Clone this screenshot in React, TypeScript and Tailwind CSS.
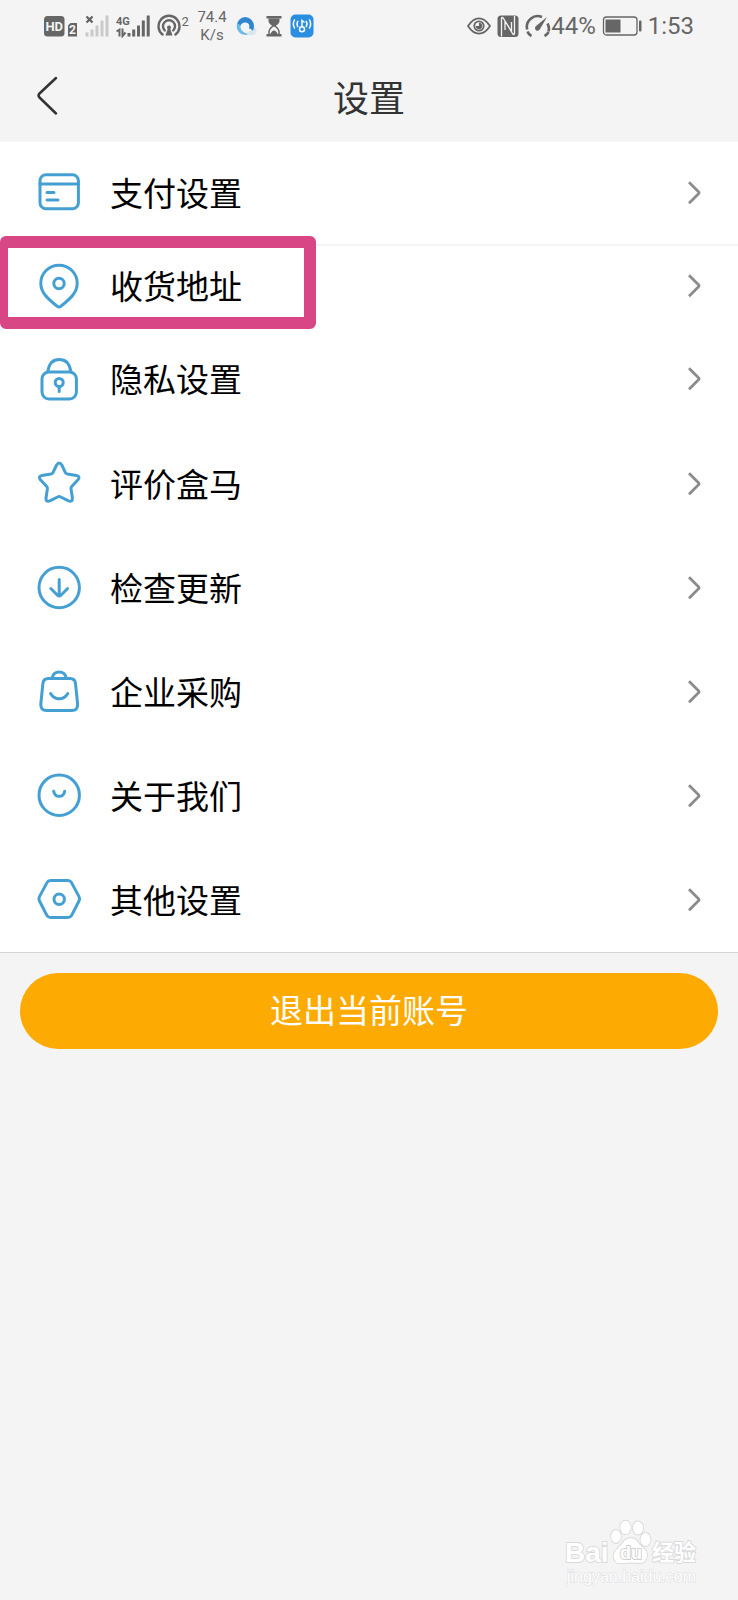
import React from 'react'

const icons = {
    card: (
        <>
            <rect x="3" y="3.7" width="38.4" height="34" rx="6" />
            <path d="M3 13H41.4M10 21.6H17M10 29H21" />
        </>
    ),
    pin: (
        <>
            <path d="M22 1.2C11.8 1.2 3.8 9.2 3.8 19.2C3.8 29.5 12 35.5 20 42.2Q22 43.8 24 42.2C32 35.5 40.2 29.5 40.2 19.2C40.2 9.2 32.2 1.2 22 1.2Z" />
            <circle cx="22" cy="19.5" r="5.2" />
        </>
    ),
    lock: (
        <>
            <rect x="5" y="15" width="34.4" height="27" rx="7" />
            <path d="M10.8 14.5C12 6.5 16.5 2.5 22.3 2.5S32.6 6.5 33.8 14.5" />
            <circle cx="22.2" cy="25.5" r="4" />
            <path d="M22.2 30V34.5" />
        </>
    ),
    star: (
        <path d="M19.6 3Q22.2 -1 24.8 3L28.4 10.6Q29 11.9 30.4 12.1L39.4 13.4Q43.6 14.5 41 17.8L34.7 24.6Q33.8 25.6 34 26.8L35.4 36Q35.6 40.4 31.6 38.9L23.8 35Q22.2 34.2 20.6 35L12.8 38.9Q8.8 40.4 9 36L10.4 26.8Q10.6 25.6 9.7 24.6L3.4 17.8Q.8 14.5 5 13.4L14 12.1Q15.4 11.9 16 10.6Z" />
    ),
    update: (
        <>
            <circle cx="22.2" cy="21.5" r="20.2" />
            <path d="M22.2 13.5V30M13.8 22.5L20.5 29.2Q22.2 31 23.9 29.2L30.6 22.5" />
        </>
    ),
    bag: (
        <>
            <path d="M11.5 8.6H33Q38 8.6 38.5 13.5L40.6 34Q41 40.6 34.8 40.6H9.6Q3.4 40.6 3.8 34L5.9 13.5Q6.4 8.6 11.5 8.6Z" />
            <path d="M15.2 7.5C17 .2 27.4 .2 29.2 7.5M13.6 23.5C17.5 30.5 26.9 30.5 30.8 23.5" />
        </>
    ),
    about: (
        <>
            <circle cx="22.2" cy="21.2" r="20.2" />
            <path d="M16.7 17.2C18 24 26.4 24 27.7 17.2" />
        </>
    ),
    more: (
        <>
            <path d="M13.5 2.6H31Q33.3 2.6 34.5 4.6L42 18.6Q43.2 20.8 42 23L34.5 37.6Q33.3 39.6 31 39.6H13.5Q11.2 39.6 10 37.6L2.5 23Q1.3 20.8 2.5 18.6L10 4.6Q11.2 2.6 13.5 2.6Z" />
            <circle cx="22.2" cy="21.2" r="5.2" />
        </>
    ),
}

const rows = [
    { label: '支付设置', icon: icons.card, size: 'h-[104px] border-b-2 border-[#f3f3f3]' },
    { label: '收货地址', icon: icons.pin, size: 'h-20', marked: true },
    { label: '隐私设置', icon: icons.lock, size: 'h-[106px]' },
    { label: '评价盒马', icon: icons.star, size: 'h-[104px]' },
    { label: '检查更新', icon: icons.update, size: 'h-[104px]' },
    { label: '企业采购', icon: icons.bag, size: 'h-[104px]' },
    { label: '关于我们', icon: icons.about, size: 'h-[104px]' },
    { label: '其他设置', icon: icons.more, size: 'h-[104px]' },
]

function StatusBar() {
    return (
        <div className="flex h-[50px] items-center justify-between px-11 pt-0.5 text-[#666]">
            <div className="flex items-center gap-[7px]">
                <svg width="34" height="24" viewBox="0 0 34 24" fill="currentColor">
                    <rect x="0" y="2" width="20.5" height="20.5" rx="3.5" />
                    <text x="10.2" y="17" fontSize="13" fontWeight="700" fill="#f4f4f4" textAnchor="middle">HD</text>
                    <path d="M26.5 9H33V22.5H24V11.5Z" />
                    <text x="28.5" y="20" fontSize="12" fontWeight="700" fill="#f4f4f4" textAnchor="middle">2</text>
                </svg>
                <svg width="24" height="24" viewBox="0 0 24 24" fill="#c9c9c9">
                    <path d="M.5 18.5h3v4h-3zM5.5 15.5h3v7h-3zM10.5 11.5h3v11h-3zM15.5 6.5h3v16h-3zM20.5 1.5h3v21h-3z" />
                    <path d="M1.5 2.5L7.5 8.5M7.5 2.5L1.5 8.5" stroke="#616161" strokeWidth="2.2" />
                </svg>
                <svg width="34" height="24" viewBox="0 0 34 24" fill="currentColor">
                    <text x="0" y="11" fontSize="11" fontWeight="700">4G</text>
                    <path d="M11.5 19h3v3.5h-3zM16.2 15.5h3v7h-3zM21 11.5h3v11h-3zM25.8 6.5h3v16h-3zM30.7 1.5h3v21h-3z" />
                    <path d="M.5 17.5L3.5 15.5V22.5M6.5 14.5V22L9.5 18.5" fill="none" stroke="currentColor" strokeWidth="2" />
                </svg>
                <svg width="33" height="24" viewBox="0 0 33 24" fill="none" stroke="currentColor" strokeWidth="2.4" strokeLinecap="round">
                    <path d="M5.5 20.5A10.5 10.5 0 1 1 18.5 20.5" />
                    <path d="M7.8 16.5A6 6 0 1 1 16.2 16.5" />
                    <path d="M12 11.5A2 2 0 0 1 13.3 15L15.5 21.5H8.5L10.7 15A2 2 0 0 1 12 11.5Z" fill="currentColor" stroke="none" />
                    <text x="24.5" y="12" fontSize="13" fill="currentColor" stroke="none">2</text>
                </svg>
                <div className="flex h-9 w-[30px] flex-col text-center text-[15px] leading-[18px]">
                    <span>74.4</span>
                    <span>K/s</span>
                </div>
                <svg width="24" height="24" viewBox="0 0 24 24">
                    <path d="M10 21H19.5A4.5 4.5 0 0 0 20.5 13Z" fill="#dbe7ef" />
                    <path d="M11 3A9 9 0 0 1 20 12Q20 15 18.5 17Q17.5 14 15 14.5Q16.5 9.5 12 8.5Q7 8 6 13Q6 17 9 20.5A9 9 0 0 1 11 3Z" fill="#2d86cf" />
                    <path d="M3 9.5A9 9 0 0 0 9 20.5Q12 21.5 14 20Q8 18.5 6.5 14Q6.5 9.5 3 9.5Z" fill="#67bdea" />
                </svg>
                <svg width="18" height="24" viewBox="0 0 18 24" fill="currentColor">
                    <path d="M1.5 2H16.5V4.5H1.5ZM1.5 20H16.5V22.5H1.5Z" />
                    <path d="M3.5 4.5H14.5V7Q14.5 9.5 10.5 12H7.5Q3.5 9.5 3.5 7Z" />
                    <path d="M4 20V18Q4 15 8 12H10Q14 15 14 18V20" fill="none" stroke="currentColor" strokeWidth="1.5" />
                    <path d="M5 20.5Q7 16.5 9 16.5T13 20.5Z" />
                </svg>
                <svg width="24" height="24" viewBox="0 0 24 24" fill="none" stroke="#fff" strokeWidth="1.5" strokeLinecap="round">
                    <rect x=".5" y=".5" width="23" height="23" rx="5" fill="#2b8ee0" stroke="none" />
                    <path d="M4.5 6Q2.2 10 4.5 14M7.7 7.5Q6.2 10 7.7 12.5M19.5 6Q21.8 10 19.5 14M16.3 7.5Q17.8 10 16.3 12.5M12 12.5V6.5L14 8" />
                    <circle cx="12" cy="15.2" r="2.5" />
                </svg>
            </div>
            <div className="flex items-center gap-1.5">
                <svg width="24" height="24" viewBox="0 0 24 24" fill="none" stroke="currentColor" strokeWidth="1.8">
                    <path d="M1 12Q6 4.3 12 4.3T23 12Q18 19.7 12 19.7T1 12Z" />
                    <circle cx="12" cy="12" r="4.7" />
                    <path d="M12 8.8V12H8.8A3.2 3.2 0 1 0 12 8.8Z" fill="currentColor" stroke="none" />
                </svg>
                <svg width="22" height="24" viewBox="0 0 22 24" fill="none">
                    <rect x=".5" y="1.5" width="21" height="21.5" rx="3.5" fill="currentColor" />
                    <path d="M4.5 22.5V4.5Q5 2.5 6.5 4.5L14.5 17.5V8M17.5 2V19.5Q17 21.5 15.5 19.5L8 7V16" stroke="#f4f4f4" strokeWidth="1.3" />
                </svg>
                <div className="flex items-center">
                    <svg width="26" height="24" viewBox="0 0 26 24" fill="none" stroke="currentColor" strokeWidth="2.6">
                        <path d="M2.2 15.5A10.8 10.8 0 0 1 17 3M2.5 17.5Q3.5 20.5 6.5 22M22.5 9.5A10.8 10.8 0 0 1 23.5 17.5M23.5 18Q22.5 20.5 19.5 22" />
                        <path d="M22 3L15 15A2.6 2.6 0 1 1 11 12Z" fill="currentColor" stroke="none" />
                    </svg>
                    <span className="text-2xl leading-8">44%</span>
                </div>
                <svg width="40" height="24" viewBox="0 0 40 24" fill="currentColor">
                    <rect x="1.5" y="3" width="33.5" height="18" rx="3" fill="none" stroke="currentColor" strokeWidth="1.3" />
                    <rect x="3.5" y="5.5" width="15" height="13" />
                    <rect x="37" y="6.5" width="2.5" height="11" rx="1" />
                </svg>
                <span className="text-2xl leading-8">1:53</span>
            </div>
        </div>
    )
}

function Watermark() {
    return (
        <footer className="mt-auto flex justify-end pb-3 pr-[38px]">
            <svg width="136" height="70" viewBox="0 0 136 70" fill="#fff" stroke="#dadadd" strokeWidth="1.8" paintOrder="stroke">
                <text x="1" y="44" fontSize="28" fontWeight="700" fontFamily="Liberation Sans, sans-serif">Bai</text>
                <ellipse cx="52" cy="18.5" rx="5" ry="6.5" />
                <ellipse cx="61.5" cy="9.5" rx="5.2" ry="6.8" />
                <ellipse cx="74" cy="10" rx="5.2" ry="6.5" />
                <ellipse cx="81.5" cy="21.5" rx="5" ry="6.5" />
                <path d="M67 20Q72 20 75 26Q84 33 83 38Q82 46 74 45Q67 44 60 45Q50 47 49.5 38Q50 33 58 26Q61 20 67 20Z" />
                <text x="56" y="41" fontSize="18" fontWeight="700" fontFamily="Liberation Sans, sans-serif" stroke="#cfcfd1">du</text>
                <text x="88" y="42" fontSize="22" fontWeight="700" fontFamily="Noto Sans CJK SC, sans-serif">经验</text>
                <text x="3" y="64" fontSize="16" fontFamily="Liberation Sans, sans-serif" strokeWidth="1">jingyan.baidu.com</text>
            </svg>
        </footer>
    )
}

export default function App() {
    return (
        <div className="flex min-h-screen flex-col overflow-hidden bg-[#f4f4f4] font-['Roboto','Noto_Sans_CJK_SC',sans-serif]">
            <StatusBar />
            <header className="grid h-[92px] grid-cols-[1fr_auto_1fr] items-center px-9 text-[#333]">
                <button type="button" aria-label="返回" className="justify-self-start">
                    <svg width="24" height="40" viewBox="0 0 24 40" fill="none" stroke="currentColor" strokeWidth="2.5" strokeLinecap="round">
                        <path d="M20 2L3.5 17.5Q1.5 19.5 3.5 21.5L20 37.5" />
                    </svg>
                </button>
                <h1 className="pt-2 text-[36px] leading-[52px]">设置</h1>
            </header>
            <nav className="border-b border-[#d6d6d6] bg-white">
                {rows.map((row) => (
                    <a
                        key={row.label}
                        href="#"
                        className={`relative flex items-center pl-[37px] pr-9 text-black ${row.size}`}
                    >
                        <svg
                            width="44"
                            height="44"
                            viewBox="0 0 44 44"
                            fill="none"
                            stroke="#449fd3"
                            strokeWidth="3"
                            strokeLinecap="round"
                            strokeLinejoin="round"
                            className="overflow-visible"
                        >
                            {row.icon}
                        </svg>
                        <span className="ml-[29px] pt-1 text-[33px] leading-[48px]">{row.label}</span>
                        <svg width="16" height="26" viewBox="0 0 16 26" fill="none" stroke="#8c8c8c" strokeWidth="2.8" className="ml-auto">
                            <path d="M3 2.2L12.5 11.7Q13.5 12.7 12.5 13.7L3 23.2" />
                        </svg>
                        {row.marked && (
                            <span className="absolute -bottom-[3px] -top-[10px] left-0 w-[316px] rounded-md border-[12px] border-l-8 border-[#d94686]" />
                        )}
                    </a>
                ))}
            </nav>
            <div className="px-5 pt-5">
                <button type="button" className="h-[76px] w-full rounded-full bg-[#fdaa02] pt-0.5 text-[33px] leading-[48px] text-white">
                    退出当前账号
                </button>
            </div>
            <Watermark />
        </div>
    )
}
